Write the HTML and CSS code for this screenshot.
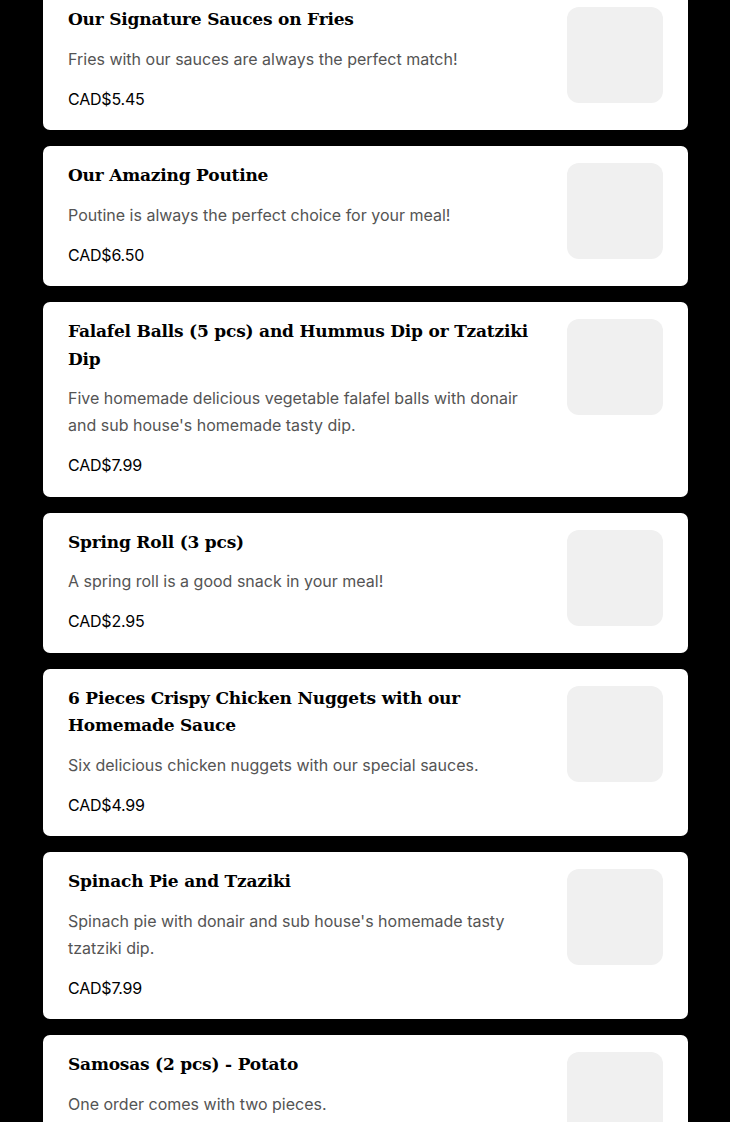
FILE: index.html
```html
<!DOCTYPE html>
<html lang="en">
<head>
<meta charset="utf-8">
<title>Menu</title>
<link rel="stylesheet" href="styles.css">
</head>
<body>
<main class="list">
  <article class="card">
    <div class="info">
      <h3 class="title">Our Signature Sauces on Fries</h3>
      <p class="desc">Fries with our sauces are always the perfect match!</p>
      <p class="price">CAD$5.45</p>
    </div>
    <div class="thumb"></div>
  </article>
  <article class="card">
    <div class="info">
      <h3 class="title">Our Amazing Poutine</h3>
      <p class="desc">Poutine is always the perfect choice for your meal!</p>
      <p class="price">CAD$6.50</p>
    </div>
    <div class="thumb"></div>
  </article>
  <article class="card">
    <div class="info">
      <h3 class="title">Falafel Balls (5 pcs) and Hummus Dip or Tzatziki Dip</h3>
      <p class="desc">Five homemade delicious vegetable falafel balls with donair and sub house's homemade tasty dip.</p>
      <p class="price">CAD$7.99</p>
    </div>
    <div class="thumb"></div>
  </article>
  <article class="card">
    <div class="info">
      <h3 class="title">Spring Roll (3 pcs)</h3>
      <p class="desc">A spring roll is a good snack in your meal!</p>
      <p class="price">CAD$2.95</p>
    </div>
    <div class="thumb"></div>
  </article>
  <article class="card">
    <div class="info">
      <h3 class="title">6 Pieces Crispy Chicken Nuggets with our Homemade Sauce</h3>
      <p class="desc">Six delicious chicken nuggets with our special sauces.</p>
      <p class="price">CAD$4.99</p>
    </div>
    <div class="thumb"></div>
  </article>
  <article class="card">
    <div class="info">
      <h3 class="title">Spinach Pie and Tzaziki</h3>
      <p class="desc">Spinach pie with donair and sub house's homemade tasty tzatziki dip.</p>
      <p class="price">CAD$7.99</p>
    </div>
    <div class="thumb"></div>
  </article>
  <article class="card">
    <div class="info">
      <h3 class="title">Samosas (2 pcs) - Potato</h3>
      <p class="desc">One order comes with two pieces.</p>
      <p class="price">CAD$2.49</p>
    </div>
    <div class="thumb"></div>
  </article>
</main>
</body>
</html>
```
FILE: styles.css
```css
* { box-sizing: border-box; }
html, body { margin: 0; padding: 0; background: #000; }
body { overflow: hidden; height: 1122px; }
.list {
  display: flex;
  flex-direction: column;
  gap: 16px;
  width: 645px;
  margin: -10px 0 0 43px;
}
.card {
  background: #fff;
  border-radius: 7px;
  display: flex;
  gap: 24px;
  padding: 16px 25px 19.5px 25px;
}
.info { flex: 1; min-width: 0; }
.title {
  margin: 0;
  font-family: "DejaVu Serif", serif;
  font-weight: bold;
  font-size: 17px;
  line-height: 27.5px;
  color: #000;
  letter-spacing: -0.2px;
}
.desc {
  margin: 12px 0 0;
  font-family: Inter, "Noto Sans", sans-serif;
  font-size: 16px;
  line-height: 27px;
  color: #545454;
}
.price {
  margin: 14px 0 0;
  font-family: Inter, "Noto Sans", sans-serif;
  font-size: 16px;
  line-height: 24px;
  color: #000;
  letter-spacing: -0.2px;
}
.thumb {
  flex: none;
  width: 96px;
  height: 96px;
  margin-top: 1px;
  border-radius: 12px;
  background: #f0f0f0;
}
```
